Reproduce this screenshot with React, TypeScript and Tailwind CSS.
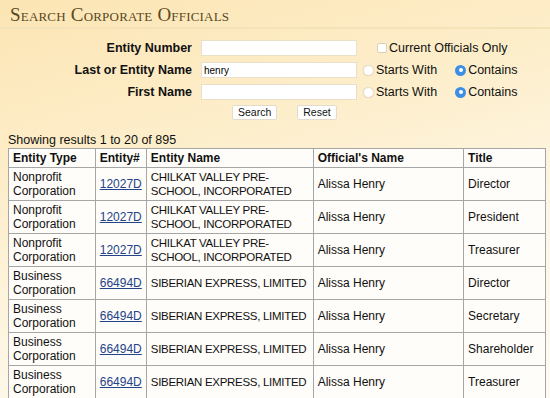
import React from "react";

type Row = {
  type: string;
  num: string;
  name: string;
  official: string;
  title: string;
};

const ROWS: Row[] = [
  { type: "Nonprofit Corporation", num: "12027D", name: "CHILKAT VALLEY PRE-SCHOOL, INCORPORATED", official: "Alissa Henry", title: "Director" },
  { type: "Nonprofit Corporation", num: "12027D", name: "CHILKAT VALLEY PRE-SCHOOL, INCORPORATED", official: "Alissa Henry", title: "President" },
  { type: "Nonprofit Corporation", num: "12027D", name: "CHILKAT VALLEY PRE-SCHOOL, INCORPORATED", official: "Alissa Henry", title: "Treasurer" },
  { type: "Business Corporation", num: "66494D", name: "SIBERIAN EXPRESS, LIMITED", official: "Alissa Henry", title: "Director" },
  { type: "Business Corporation", num: "66494D", name: "SIBERIAN EXPRESS, LIMITED", official: "Alissa Henry", title: "Secretary" },
  { type: "Business Corporation", num: "66494D", name: "SIBERIAN EXPRESS, LIMITED", official: "Alissa Henry", title: "Shareholder" },
  { type: "Business Corporation", num: "66494D", name: "SIBERIAN EXPRESS, LIMITED", official: "Alissa Henry", title: "Treasurer" },
  { type: "Business Corporation", num: "66494D", name: "SIBERIAN EXPRESS, LIMITED", official: "Alissa Henry", title: "Vice President" },
];

function Radio({ checked }: { checked?: boolean }) {
  if (checked) {
    return (
      <span className="block w-[11px] h-[11px] rounded-full bg-[#3d8ee6] flex items-center justify-center shrink-0">
        <span className="block w-[4px] h-[4px] rounded-full bg-white" />
      </span>
    );
  }
  return (
    <span className="block w-[11px] h-[11px] rounded-full bg-white border border-[#e8dfcc] shadow-[0_0_1px_rgba(0,0,0,0.15)] shrink-0" />
  );
}

function TextBox({ value }: { value?: string }) {
  return (
    <div className="ml-[9px] w-[156px] h-[16px] bg-white border border-[#eadfc8] flex items-center px-[2px] text-[10px] text-black">
      {value}
    </div>
  );
}

function Options() {
  return (
    <>
      <span className="ml-[6px] flex"><Radio /></span>
      <span className="ml-[2px]">Starts With</span>
      <span className="ml-[18px] flex"><Radio checked /></span>
      <span className="ml-[2px]">Contains</span>
    </>
  );
}

export default function App() {
  const cell = "border border-[#a6a6a6] px-[4px] py-[2px] align-middle";
  return (
    <div
      className="w-[550px] h-[398px] overflow-hidden bg-[linear-gradient(165deg,#fce5b4_0%,#fdeecb_35%,#fef6e4_65%,#fffaf1_100%)] text-[#111]"
      style={{ fontFamily: '"Liberation Sans", Arial, sans-serif' }}
    >
      {/* Title */}
      <div className="h-[29px] px-[10px] pt-[5px] border-b-2 border-[#f4e2b9]">
        <h1
          className="text-[19px] leading-[20px] text-[#594823] tracking-[0.2px]"
          style={{ fontFamily: '"Liberation Serif", "Times New Roman", serif', fontVariant: "small-caps" }}
        >
          Search Corporate Officials
        </h1>
      </div>

      {/* Form */}
      <div className="mt-[8px] text-[12.5px]">
        <div className="flex items-center h-[22px]">
          <div className="w-[192px] text-right font-bold">Entity Number</div>
          <TextBox />
          <span className="ml-[20px] block w-[10px] h-[10px] rounded-[2px] bg-white border border-[#d8cfbd] shrink-0" />
          <span className="ml-[2px]">Current Officials Only</span>
        </div>
        <div className="flex items-center h-[22px]">
          <div className="w-[192px] text-right font-bold">Last or Entity Name</div>
          <TextBox value="henry" />
          <Options />
        </div>
        <div className="flex items-center h-[22px]">
          <div className="w-[192px] text-right font-bold">First Name</div>
          <TextBox />
          <Options />
        </div>
        <div className="flex h-[18px] items-center pl-[232px] gap-[20px] text-[10.5px]">
          <button className="h-[15px] px-[5px] bg-white border border-[#e3dccd] rounded-[2px] leading-[13px]">Search</button>
          <button className="h-[15px] px-[5px] bg-white border border-[#e3dccd] rounded-[2px] leading-[13px]">Reset</button>
        </div>
      </div>

      {/* Results */}
      <div className="px-[8px] mt-[12px]">
        <div className="text-[12.5px] leading-[15px]">Showing results 1 to 20 of 895</div>
        <table className="w-[538px] border-collapse border border-[#9a9a9a] text-[12px] leading-[14px] bg-[#fffdf9]">
          <colgroup>
            <col className="w-[87px]" />
            <col className="w-[49px]" />
            <col className="w-[168px]" />
            <col className="w-[152px]" />
            <col className="w-[82px]" />
          </colgroup>
          <thead>
            <tr className="h-[16px] text-left">
              <th className={`${cell} font-bold py-[1px] leading-[14px]`}>Entity Type</th>
              <th className={`${cell} font-bold py-[1px] leading-[14px]`}>Entity#</th>
              <th className={`${cell} font-bold py-[1px] leading-[14px]`}>Entity Name</th>
              <th className={`${cell} font-bold py-[1px] leading-[14px]`}>Official's Name</th>
              <th className={`${cell} font-bold py-[1px] leading-[14px]`}>Title</th>
            </tr>
          </thead>
          <tbody>
            {ROWS.map((r, i) => (
              <tr key={i} className="h-[33px]">
                <td className={cell}>{r.type}</td>
                <td className={cell}>
                  <a href="#" className="text-[#23438a] underline">{r.num}</a>
                </td>
                <td className={`${cell} px-[3px] text-[11.5px] tracking-[-0.3px] leading-[14px]`}>{r.name}</td>
                <td className={cell}>{r.official}</td>
                <td className={cell}>{r.title}</td>
              </tr>
            ))}
          </tbody>
        </table>
      </div>
    </div>
  );
}
